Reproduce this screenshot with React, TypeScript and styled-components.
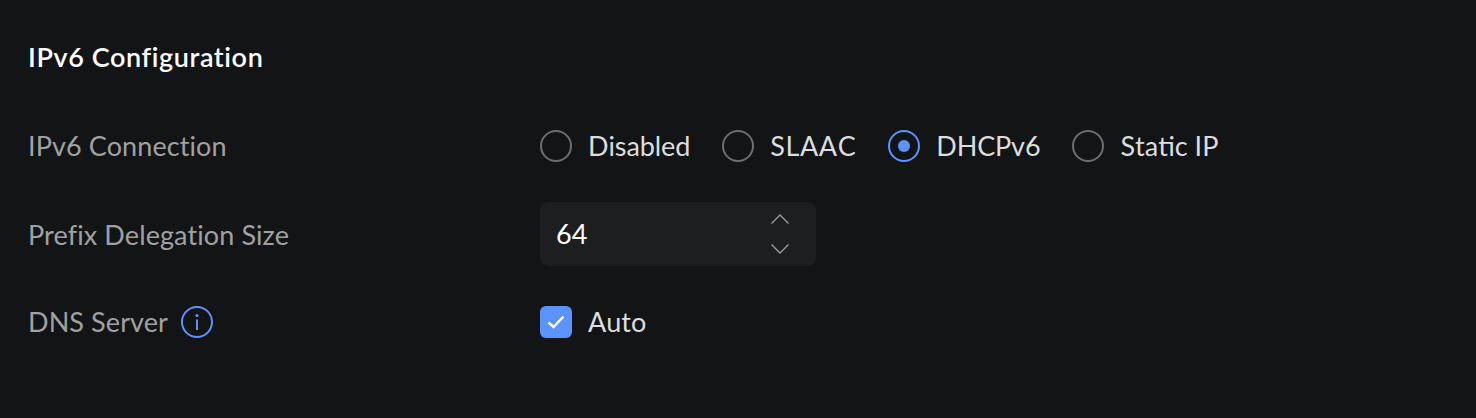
import React from 'react';
import styled, { createGlobalStyle } from 'styled-components';

const GlobalStyle = createGlobalStyle`
  html, body {
    margin: 0;
    background: #131416;
  }
`;

const Page = styled.div`
  box-sizing: border-box;
  width: 1476px;
  height: 418px;
  padding: 39px 28px 0;
  background: #131416;
  font-family: 'Lato', 'Liberation Sans', sans-serif;
`;

const Title = styled.h2`
  margin: 0 0 39px;
  height: 36px;
  font-size: 27px;
  line-height: 36px;
  font-weight: 600;
  letter-spacing: 0.6px;
  color: #ffffff;
`;

const Rows = styled.div`
  display: flex;
  flex-direction: column;
  gap: 24px;
`;

const Row = styled.div`
  display: grid;
  grid-template-columns: 512px 1fr;
  align-items: center;
  min-height: 64px;
`;

const Label = styled.div`
  display: flex;
  align-items: center;
  gap: 13px;
  font-size: 27px;
  letter-spacing: 0.1px;
  color: #a0a1a2;
`;

// text sits 1px higher than the box centre, unless $level
const Text = styled.span<{ $spacing?: number; $level?: boolean }>`
  padding-bottom: ${(p) => (p.$level ? '0' : '2px')};
  letter-spacing: ${(p) => (p.$spacing !== undefined ? `${p.$spacing}px` : 'inherit')};
`;

const Group = styled.div`
  display: flex;
  align-items: center;
  gap: 32px;
`;

const Option = styled.label`
  display: flex;
  align-items: center;
  gap: 16px;
  font-size: 27px;
  font-kerning: none;
  color: #dcdddd;
`;

const Radio = styled.span<{ $checked?: boolean }>`
  box-sizing: border-box;
  display: flex;
  align-items: center;
  justify-content: center;
  width: 32px;
  height: 32px;
  border-radius: 50%;
  border: 2px solid ${(p) => (p.$checked ? '#5b94ff' : '#6a6e75')};

  &::after {
    content: '';
    display: ${(p) => (p.$checked ? 'block' : 'none')};
    width: 12px;
    height: 12px;
    border-radius: 50%;
    background: #5b94ff;
  }
`;

const Stepper = styled.div`
  box-sizing: border-box;
  display: flex;
  align-items: center;
  justify-content: space-between;
  width: 276px;
  height: 64px;
  padding: 0 27px 0 16px;
  border-radius: 8px;
  background: #1d1e20;
`;

const StepValue = styled.span`
  padding-bottom: 2px;
  font-size: 27px;
  color: #ffffff;
`;

const StepArrows = styled.div`
  display: flex;
  flex-direction: column;
  gap: 20px;

  svg {
    display: block;
  }
`;

const Checkbox = styled.span`
  display: flex;
  align-items: center;
  justify-content: center;
  width: 32px;
  height: 32px;
  border-radius: 6px;
  background: #5b94ff;
`;

export default function App() {
  return (
    <Page>
      <GlobalStyle />
      <Title>IPv6 Configuration</Title>
      <Rows>
        <Row>
          <Label>
            <Text>IPv6 Connection</Text>
          </Label>
          <Group>
            <Option>
              <Radio />
              <Text $spacing={-0.1}>Disabled</Text>
            </Option>
            <Option>
              <Radio />
              <Text $spacing={0.6}>SLAAC</Text>
            </Option>
            <Option>
              <Radio $checked />
              <Text $spacing={-0.15}>DHCPv6</Text>
            </Option>
            <Option>
              <Radio />
              <Text>Static IP</Text>
            </Option>
          </Group>
        </Row>
        <Row>
          <Label>
            <Text $level>Prefix Delegation Size</Text>
          </Label>
          <Stepper>
            <StepValue>64</StepValue>
            <StepArrows>
              <svg width="18" height="10" viewBox="0 0 18 10" fill="none" stroke="#9a9b9c" strokeWidth="1.4">
                <path d="M0.5 9.5 9 1l8.5 8.5" />
              </svg>
              <svg width="18" height="10" viewBox="0 0 18 10" fill="none" stroke="#9a9b9c" strokeWidth="1.4">
                <path d="M0.5 0.5 9 9l8.5-8.5" />
              </svg>
            </StepArrows>
          </Stepper>
        </Row>
        <Row>
          <Label>
            <Text>DNS Server</Text>
            <svg width="32" height="32" viewBox="0 0 32 32" fill="none">
              <circle cx="16" cy="16" r="15" stroke="#5b94ff" strokeWidth="2" />
              <circle cx="16" cy="9.5" r="1.6" fill="#5b94ff" />
              <path d="M16 13.5v10.5" stroke="#5b94ff" strokeWidth="2" />
            </svg>
          </Label>
          <Option>
            <Checkbox>
              <svg width="18" height="14" viewBox="0 0 18 14" fill="none" stroke="#ffffff" strokeWidth="2.4">
                <path d="M1.5 7.5 6.5 12 16.5 1.5" />
              </svg>
            </Checkbox>
            <Text>Auto</Text>
          </Option>
        </Row>
      </Rows>
    </Page>
  );
}
